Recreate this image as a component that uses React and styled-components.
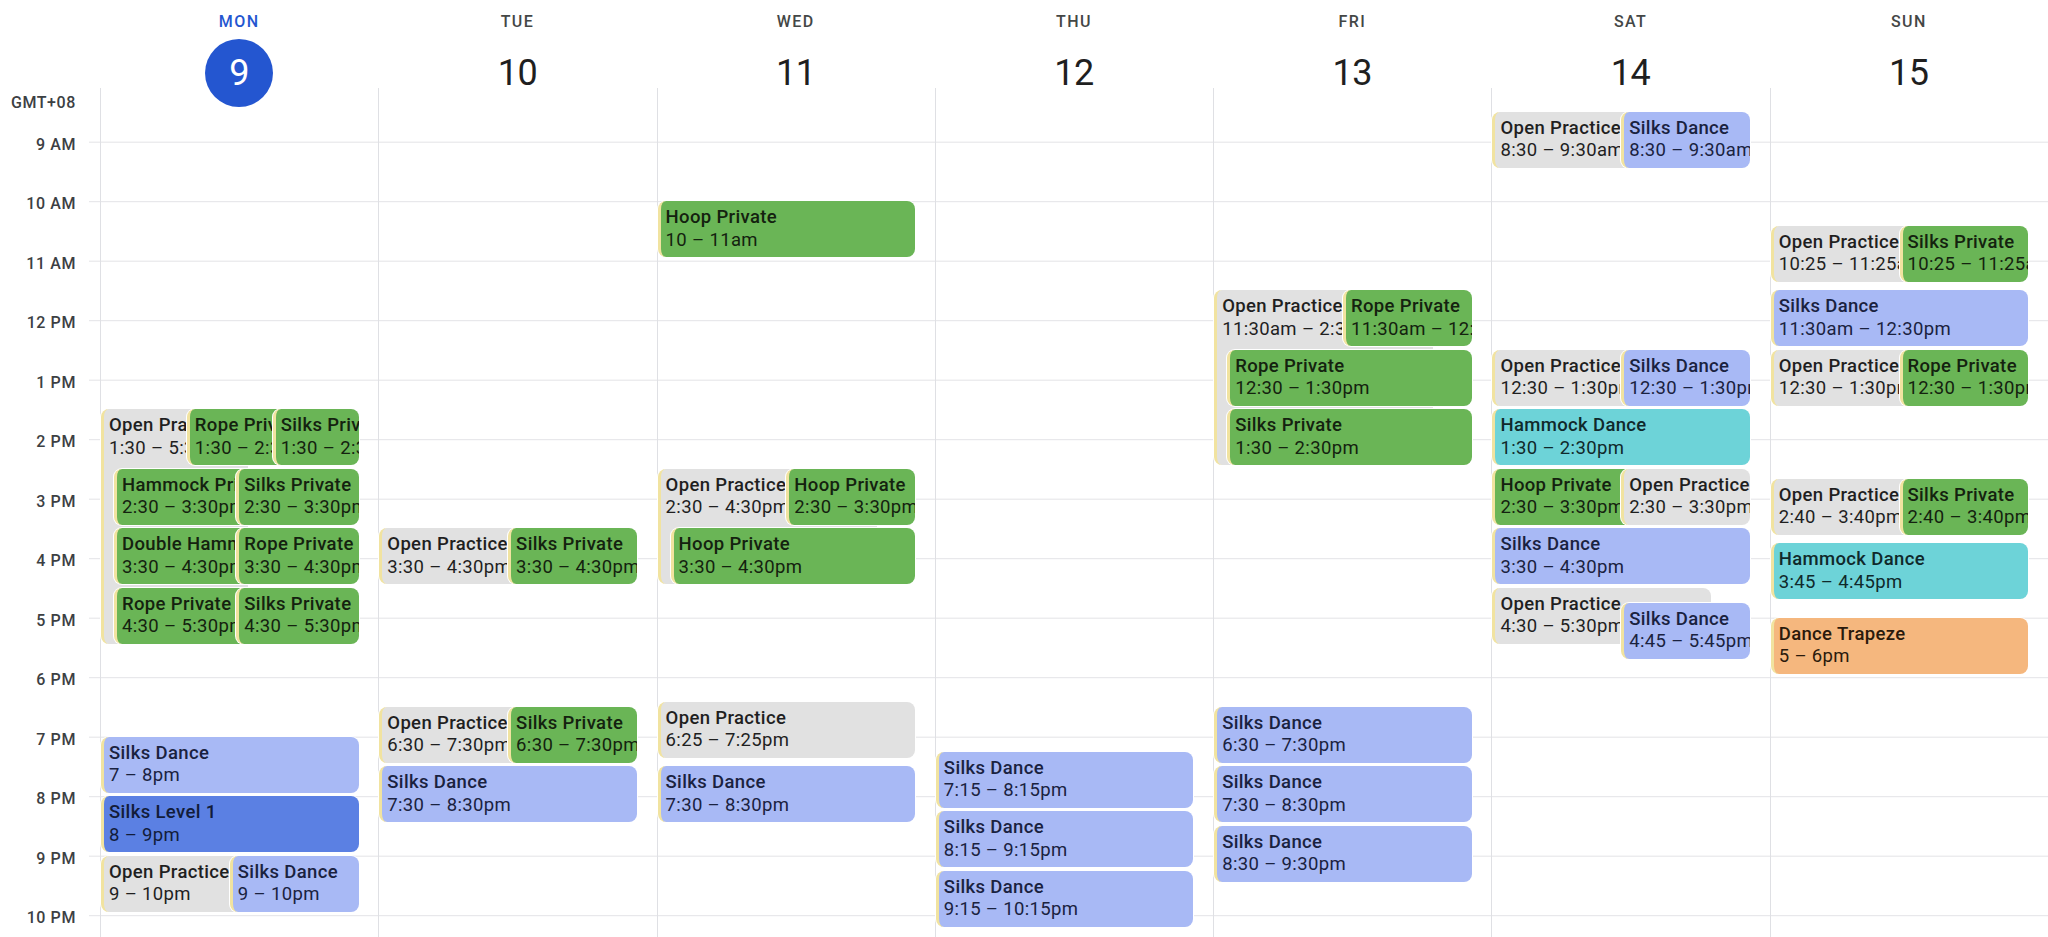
import styled, { createGlobalStyle } from "styled-components";

const HOUR = 59.5;
const FIRST_LINE = 53.7;
const LANE = 257.6;

const GlobalStyle = createGlobalStyle`
  html, body {
    margin: 0;
    padding: 0;
    background: #fff;
    overflow: hidden;
  }
  body {
    font-family: Roboto, "Liberation Sans", sans-serif;
    color: #1f1f1f;
  }
`;

const days = [
  { name: "MON", date: 9, today: true },
  { name: "TUE", date: 10 },
  { name: "WED", date: 11 },
  { name: "THU", date: 12 },
  { name: "FRI", date: 13 },
  { name: "SAT", date: 14 },
  { name: "SUN", date: 15 },
];

const hours = ["9 AM", "10 AM", "11 AM", "12 PM", "1 PM", "2 PM", "3 PM", "4 PM", "5 PM", "6 PM", "7 PM", "8 PM", "9 PM", "10 PM"];

// shorthands for overlapping layouts
const LEFT = { x: 0, span: 0.85 };
const RIGHT = { x: 0.5, span: 0.5 };

const ev = (start, end, title, time, kind, opts = {}) => ({ start, end, title, time, kind, ...opts });

const week = [
  [
    ev(13.5, 17.5, "Open Practice", "1:30 – 5:30pm", "gray", { x: 0, span: 0.57 }),
    ev(13.5, 14.5, "Rope Private", "1:30 – 2:30pm", "green", { x: 1 / 3, span: 0.57 }),
    ev(13.5, 14.5, "Silks Private", "1:30 – 2:30pm", "green", { x: 2 / 3, span: 1 / 3 }),
    ev(14.5, 15.5, "Hammock Private", "2:30 – 3:30pm", "green", { ...LEFT, indent: 13 }),
    ev(14.5, 15.5, "Silks Private", "2:30 – 3:30pm", "green", { ...RIGHT, indent: 13 }),
    ev(15.5, 16.5, "Double Hammock", "3:30 – 4:30pm", "green", { ...LEFT, indent: 13 }),
    ev(15.5, 16.5, "Rope Private", "3:30 – 4:30pm", "green", { ...RIGHT, indent: 13 }),
    ev(16.5, 17.5, "Rope Private", "4:30 – 5:30pm", "green", { ...LEFT, indent: 13 }),
    ev(16.5, 17.5, "Silks Private", "4:30 – 5:30pm", "green", { ...RIGHT, indent: 13 }),
    ev(19, 20, "Silks Dance", "7 – 8pm", "blue"),
    ev(20, 21, "Silks Level 1", "8 – 9pm", "navy"),
    ev(21, 22, "Open Practice", "9 – 10pm", "gray", LEFT),
    ev(21, 22, "Silks Dance", "9 – 10pm", "blue", RIGHT),
  ],
  [
    ev(15.5, 16.5, "Open Practice", "3:30 – 4:30pm", "gray", LEFT),
    ev(15.5, 16.5, "Silks Private", "3:30 – 4:30pm", "green", RIGHT),
    ev(18.5, 19.5, "Open Practice", "6:30 – 7:30pm", "gray", LEFT),
    ev(18.5, 19.5, "Silks Private", "6:30 – 7:30pm", "green", RIGHT),
    ev(19.5, 20.5, "Silks Dance", "7:30 – 8:30pm", "blue"),
  ],
  [
    ev(10, 11, "Hoop Private", "10 – 11am", "green"),
    ev(14.5, 16.5, "Open Practice", "2:30 – 4:30pm", "gray", LEFT),
    ev(14.5, 15.5, "Hoop Private", "2:30 – 3:30pm", "green", RIGHT),
    ev(15.5, 16.5, "Hoop Private", "3:30 – 4:30pm", "green", { indent: 13 }),
    ev(18 + 25 / 60, 19 + 25 / 60, "Open Practice", "6:25 – 7:25pm", "gray"),
    ev(19.5, 20.5, "Silks Dance", "7:30 – 8:30pm", "blue"),
  ],
  [
    ev(19.25, 20.25, "Silks Dance", "7:15 – 8:15pm", "blue"),
    ev(20.25, 21.25, "Silks Dance", "8:15 – 9:15pm", "blue"),
    ev(21.25, 22.25, "Silks Dance", "9:15 – 10:15pm", "blue"),
  ],
  [
    ev(11.5, 14.5, "Open Practice", "11:30am – 2:30pm", "gray", LEFT),
    ev(11.5, 12.5, "Rope Private", "11:30am – 12:30pm", "green", RIGHT),
    ev(12.5, 13.5, "Rope Private", "12:30 – 1:30pm", "green", { indent: 13 }),
    ev(13.5, 14.5, "Silks Private", "1:30 – 2:30pm", "green", { indent: 13 }),
    ev(18.5, 19.5, "Silks Dance", "6:30 – 7:30pm", "blue"),
    ev(19.5, 20.5, "Silks Dance", "7:30 – 8:30pm", "blue"),
    ev(20.5, 21.5, "Silks Dance", "8:30 – 9:30pm", "blue"),
  ],
  [
    ev(8.5, 9.5, "Open Practice", "8:30 – 9:30am", "gray", LEFT),
    ev(8.5, 9.5, "Silks Dance", "8:30 – 9:30am", "blue", RIGHT),
    ev(12.5, 13.5, "Open Practice", "12:30 – 1:30pm", "gray", LEFT),
    ev(12.5, 13.5, "Silks Dance", "12:30 – 1:30pm", "blue", RIGHT),
    ev(13.5, 14.5, "Hammock Dance", "1:30 – 2:30pm", "cyan"),
    ev(14.5, 15.5, "Hoop Private", "2:30 – 3:30pm", "green", LEFT),
    ev(14.5, 15.5, "Open Practice", "2:30 – 3:30pm", "gray", RIGHT),
    ev(15.5, 16.5, "Silks Dance", "3:30 – 4:30pm", "blue"),
    ev(16.5, 17.5, "Open Practice", "4:30 – 5:30pm", "gray", LEFT),
    ev(16.75, 17.75, "Silks Dance", "4:45 – 5:45pm", "blue", RIGHT),
  ],
  [
    ev(10 + 25 / 60, 11 + 25 / 60, "Open Practice", "10:25 – 11:25am", "gray", LEFT),
    ev(10 + 25 / 60, 11 + 25 / 60, "Silks Private", "10:25 – 11:25am", "green", RIGHT),
    ev(11.5, 12.5, "Silks Dance", "11:30am – 12:30pm", "blue"),
    ev(12.5, 13.5, "Open Practice", "12:30 – 1:30pm", "gray", LEFT),
    ev(12.5, 13.5, "Rope Private", "12:30 – 1:30pm", "green", RIGHT),
    ev(14 + 40 / 60, 15 + 40 / 60, "Open Practice", "2:40 – 3:40pm", "gray", LEFT),
    ev(14 + 40 / 60, 15 + 40 / 60, "Silks Private", "2:40 – 3:40pm", "green", RIGHT),
    ev(15.75, 16.75, "Hammock Dance", "3:45 – 4:45pm", "cyan"),
    ev(17, 18, "Dance Trapeze", "5 – 6pm", "orange"),
  ],
];

const palette = {
  gray: { bg: "#e1e1e1", fg: "#1f1f1f" },
  green: { bg: "#6ab556", fg: "#14220f" },
  blue: { bg: "#a8b9f5", fg: "#1a2240" },
  navy: { bg: "#5b80e3", fg: "#121c3a" },
  cyan: { bg: "#6dd3d8", fg: "#10292b" },
  orange: { bg: "#f5b77e", fg: "#2a1a0c" },
};

const placeEvent = ({ start, end, x = 0, span = 1, indent = 0 }) => {
  const lane = LANE - indent;
  return {
    top: FIRST_LINE + (start - 9) * HOUR,
    height: (end - start) * HOUR - 3.5,
    left: indent + x * lane,
    width: span * lane,
  };
};

const App = () => {
  return (
    <>
      <GlobalStyle />
      <Page>
        <Header>
          <Corner />
          {days.map((d) => (
            <DayHead key={d.name}>
              <DayName $today={d.today}>{d.name}</DayName>
              <DayNum $today={d.today}>{d.date}</DayNum>
            </DayHead>
          ))}
        </Header>
        <Body>
          <Gutter>
            <ZoneLabel>GMT+08</ZoneLabel>
            {hours.map((h) => (
              <HourLabel key={h}>{h}</HourLabel>
            ))}
          </Gutter>
          {week.map((list, i) => (
            <DayColumn key={days[i].name}>
              {list.map((e, j) => (
                <Event key={j} $kind={e.kind} style={placeEvent(e)}>
                  <Title>{e.title}</Title>
                  <Time>{e.time}</Time>
                </Event>
              ))}
            </DayColumn>
          ))}
        </Body>
      </Page>
    </>
  );
};

const Page = styled.div`
  width: 2048px;
  height: 937px;
  display: grid;
  grid-template-rows: 88px 1fr;
  overflow: hidden;
  background: #fff;
`;
const Header = styled.div`
  display: grid;
  grid-template-columns: 100px repeat(7, 1fr);
`;
const Corner = styled.div``;
const DayHead = styled.div`
  display: flex;
  flex-direction: column;
  align-items: center;
  padding-top: 12px;
`;
const DayName = styled.div`
  font-size: 16px;
  line-height: 20px;
  font-weight: 500;
  letter-spacing: 1.4px;
  color: ${(p) => (p.$today ? "#2456d0" : "#444746")};
`;
const DayNum = styled.div`
  margin-top: 7px;
  width: 68px;
  height: 68px;
  border-radius: 50%;
  display: flex;
  align-items: center;
  justify-content: center;
  font-size: 36px;
  font-weight: 400;
  letter-spacing: -0.5px;
  background: ${(p) => (p.$today ? "#2456d0" : "transparent")};
  color: ${(p) => (p.$today ? "#fff" : "#1f1f1f")};
`;
const Body = styled.div`
  display: grid;
  grid-template-columns: 100px repeat(7, 1fr);
  overflow: hidden;
  background-image: linear-gradient(#e3e3e6 0, #e3e3e6 1px, transparent 1px);
  background-size: calc(100% - 89px) ${HOUR}px;
  background-repeat: repeat-y;
  background-position: 89px ${FIRST_LINE}px;
`;
const Gutter = styled.div`
  display: flex;
  flex-direction: column;
  align-items: flex-end;
  padding: 4.7px 24px 0 0;
  color: #3c4043;
  font-size: 16px;
  font-weight: 500;
  letter-spacing: 0.6px;
`;
const ZoneLabel = styled.div`
  line-height: 20px;
  margin-bottom: 22px;
`;
const HourLabel = styled.div`
  flex: none;
  height: ${HOUR}px;
  line-height: 20px;
`;
const DayColumn = styled.div`
  position: relative;
  border-left: 1px solid #dfe0e4;
`;
const Event = styled.div`
  position: absolute;
  box-sizing: border-box;
  overflow: hidden;
  border-radius: 8px;
  border-left: 3px solid #f1e3a0;
  box-shadow: 0 0 0 1px #fff;
  padding: 5px 0 0 5px;
  background: ${(p) => palette[p.$kind].bg};
  color: ${(p) => palette[p.$kind].fg};
  font-size: 18.5px;
  line-height: 22.5px;
  letter-spacing: 0.35px;
  white-space: nowrap;
`;
const Title = styled.div`
  font-weight: 500;
`;
const Time = styled.div`
  font-weight: 400;
`;

export default App;
